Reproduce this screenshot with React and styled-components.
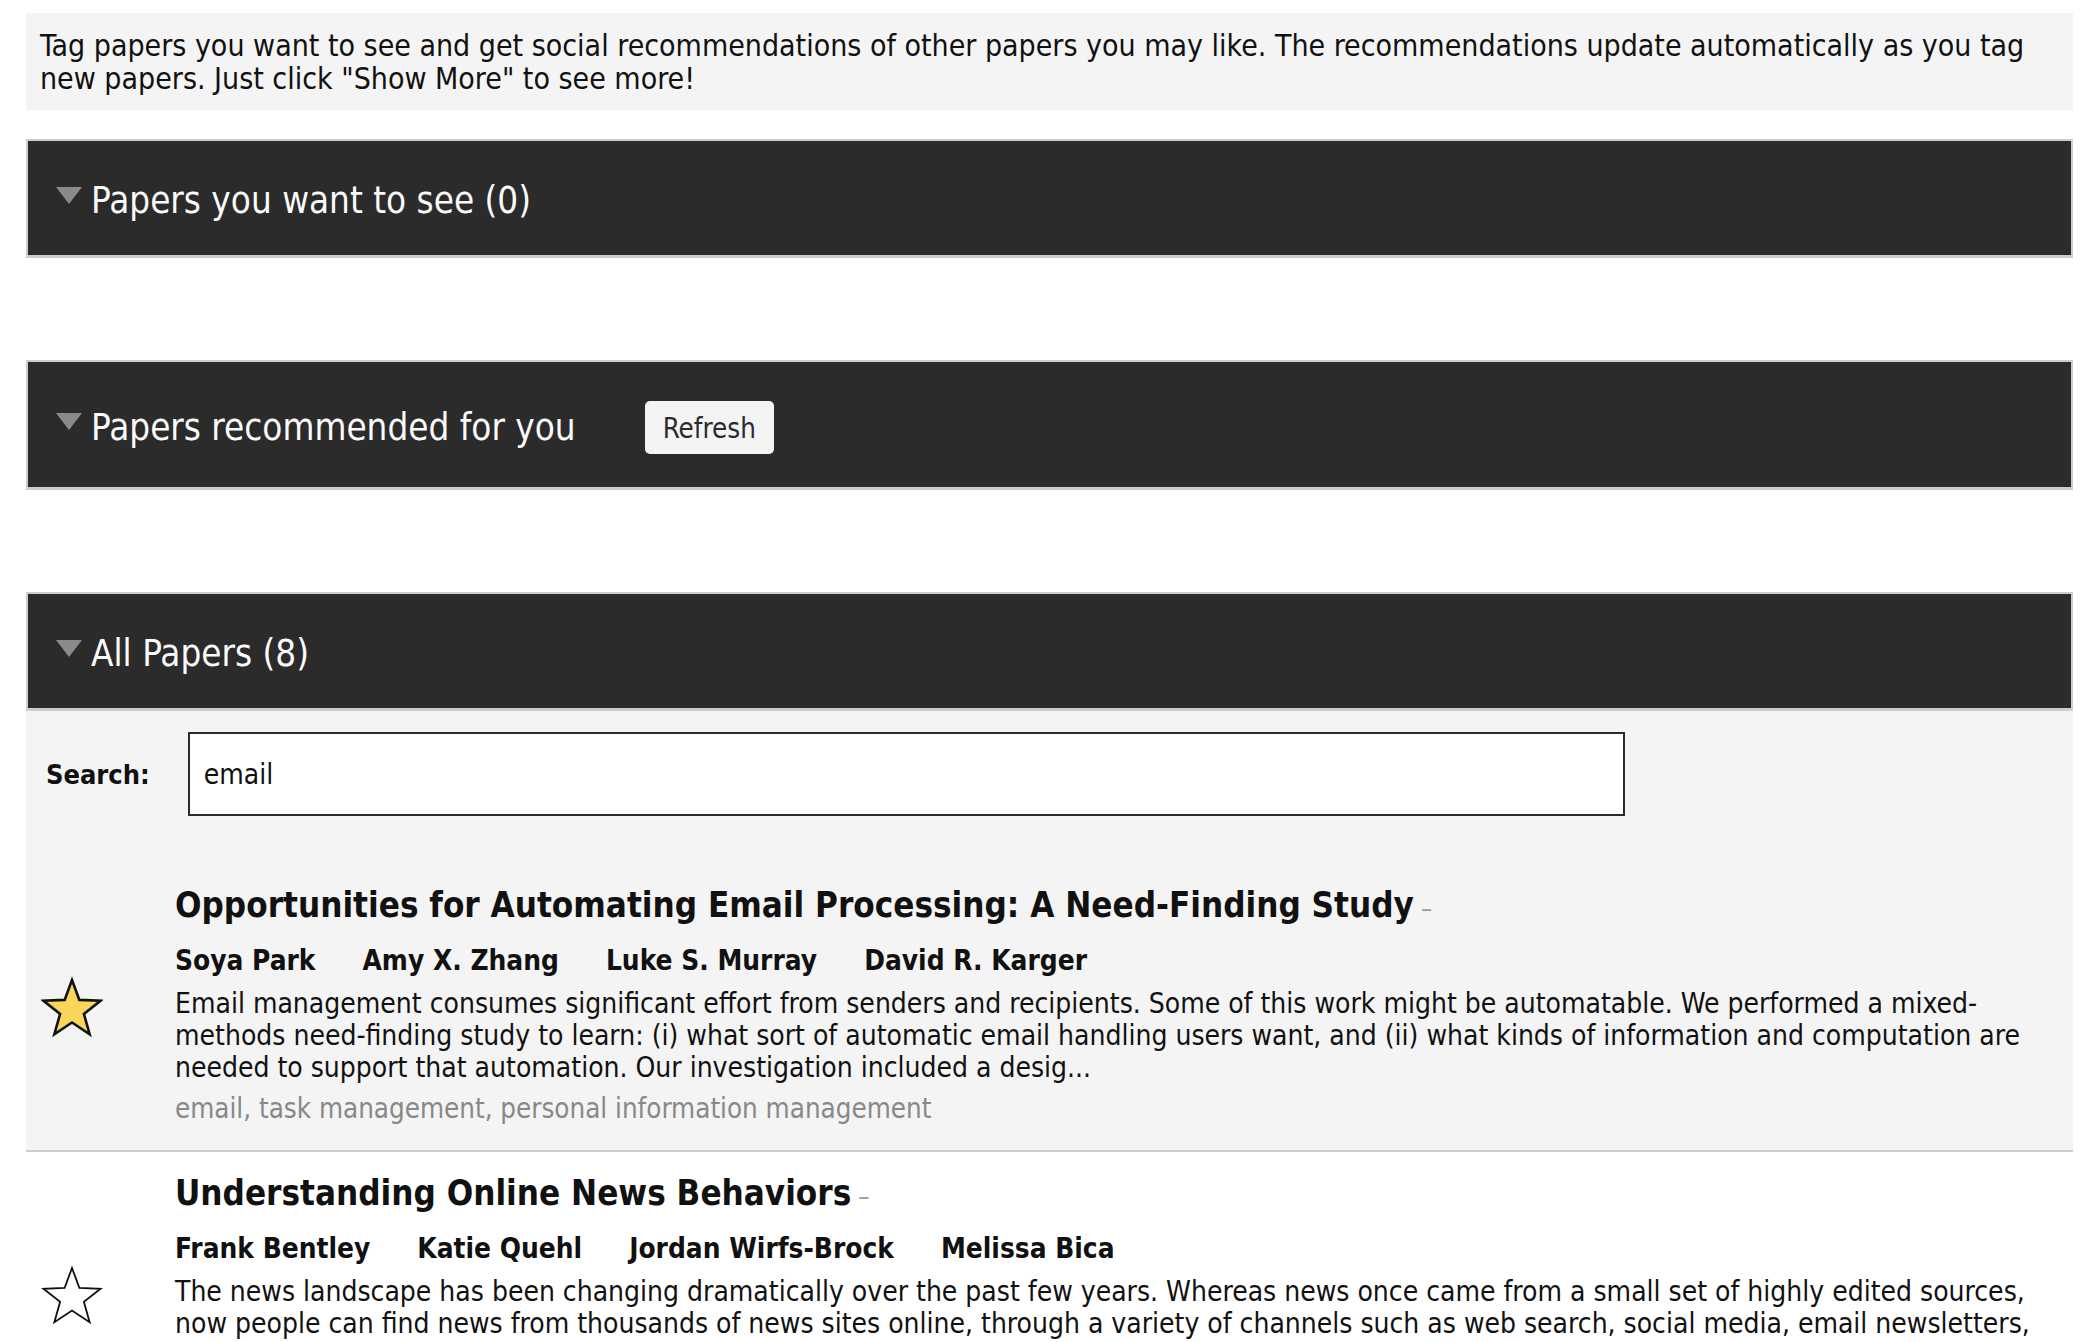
import React from "react";
import styled, { createGlobalStyle } from "styled-components";

const GlobalStyle = createGlobalStyle`
  body {
    margin: 0;
    background: #fff;
    color: #111;
    font-family: "DejaVu Sans Condensed", "DejaVu Sans", sans-serif;
  }
  * { box-sizing: border-box; }
`;

const Page = styled.div`
  padding: 13px 27px 0 26px;
`;

const Intro = styled.p`
  margin: 0 0 29px;
  padding: 16px 14px 15px;
  background: #f4f4f4;
  font-size: 30px;
  line-height: 33px;
`;

const SectionHeader = styled.div`
  display: flex;
  align-items: center;
  padding: 39px 20px 33px 28px;
  background: #2b2b2b;
  border: 2px solid #cdcdcd;
  border-bottom-width: 3px;
  color: #fafafa;
`;

const Caret = styled.span`
  width: 0;
  height: 0;
  margin: 0 9px 12px 0;
  border-left: 13.5px solid transparent;
  border-right: 13.5px solid transparent;
  border-top: 17px solid #8a8a8a;
`;

const HeaderTitle = styled.h2`
  margin: 0;
  font-size: 36.5px;
  font-weight: 400;
  line-height: 42px;
`;

const RefreshButton = styled.button`
  margin-left: 69px;
  height: 53px;
  padding: 0 18px;
  border: none;
  border-radius: 5px;
  background: #f4f4f4;
  color: #2b2b2b;
  font-family: inherit;
  font-size: 27.5px;
`;

const EmptyBody = styled.div`
  height: 102px;
`;

const SearchBar = styled.div`
  display: flex;
  align-items: center;
  gap: 38px;
  padding: 21px 0 48px 20px;
  background: #f4f4f4;
`;

const SearchLabel = styled.label`
  font-size: 27px;
  font-weight: 700;
`;

const SearchInput = styled.input`
  width: 1437px;
  height: 84px;
  padding: 0 14px;
  border: 2px solid #2b2b2b;
  background: #fff;
  color: #111;
  font-family: inherit;
  font-size: 28px;
  outline: none;
`;

const PaperRow = styled.div`
  display: grid;
  grid-template-columns: 149px 1fr;
  align-items: center;
  padding: 21px 33px 26px 0;
  background: ${(p) => (p.$starred ? "#f4f4f4" : "#fff")};
  border-bottom: 2px solid #cdcdcd;
`;

const StarCell = styled.div`
  display: flex;
  padding: 4px 0 0 15px;
`;

const PaperTitle = styled.h3`
  margin: 0;
  font-size: 34.7px;
  font-weight: 700;
  line-height: 40px;
`;

const Dash = styled.span`
  margin-left: 7px;
  color: #999;
  font-size: 25px;
  font-weight: 400;
`;

const Authors = styled.div`
  display: flex;
  gap: 47px;
  margin-top: 15px;
  font-size: 27.8px;
  font-weight: 700;
  line-height: 34px;
`;

const Abstract = styled.p`
  margin: 10px 0 0;
  font-size: 28px;
  line-height: 32px;
`;

const Tags = styled.div`
  margin-top: 8px;
  color: #888;
  font-size: 27.5px;
  line-height: 32px;
`;

const Star = ({ filled }) => (
  <svg width="62" height="62" viewBox="0 0 62 62">
    <polygon
      points="31,4 38.35,23.89 59.53,24.73 42.89,37.86 48.63,58.27 31,46.5 13.37,58.27 19.11,37.86 2.47,24.73 23.65,23.89"
      fill={filled ? "#f9d65a" : "#fff"}
      stroke="#111"
      strokeWidth={filled ? 2.6 : 1.8}
      strokeLinejoin="miter"
    />
  </svg>
);

const papers = [
  {
    starred: true,
    title: "Opportunities for Automating Email Processing: A Need-Finding Study",
    authors: ["Soya Park", "Amy X. Zhang", "Luke S. Murray", "David R. Karger"],
    abstract:
      "Email management consumes significant effort from senders and recipients. Some of this work might be automatable. We performed a mixed-methods need-finding study to learn: (i) what sort of automatic email handling users want, and (ii) what kinds of information and computation are needed to support that automation. Our investigation included a desig...",
    tags: "email, task management, personal information management",
  },
  {
    starred: false,
    title: "Understanding Online News Behaviors",
    authors: ["Frank Bentley", "Katie Quehl", "Jordan Wirfs-Brock", "Melissa Bica"],
    abstract:
      "The news landscape has been changing dramatically over the past few years. Whereas news once came from a small set of highly edited sources, now people can find news from thousands of news sites online, through a variety of channels such as web search, social media, email newsletters, media alerts, and more. We conducted a large survey and a diary study to und...",
    tags: "news, information seeking, social media",
  },
];

const Paper = ({ paper }) => (
  <PaperRow $starred={paper.starred}>
    <StarCell>
      <Star filled={paper.starred} />
    </StarCell>
    <div>
      <PaperTitle>
        {paper.title}
        <Dash>–</Dash>
      </PaperTitle>
      <Authors>
        {paper.authors.map((a) => (
          <span key={a}>{a}</span>
        ))}
      </Authors>
      <Abstract>{paper.abstract}</Abstract>
      <Tags>{paper.tags}</Tags>
    </div>
  </PaperRow>
);

export default function App() {
  return (
    <>
      <GlobalStyle />
      <Page>
        <Intro>
          Tag papers you want to see and get social recommendations of other papers you may like. The
          recommendations update automatically as you tag new papers. Just click "Show More" to see more!
        </Intro>

        <section>
          <SectionHeader>
            <Caret />
            <HeaderTitle>Papers you want to see (0)</HeaderTitle>
          </SectionHeader>
          <EmptyBody />
        </section>

        <section>
          <SectionHeader>
            <Caret />
            <HeaderTitle>Papers recommended for you</HeaderTitle>
            <RefreshButton>Refresh</RefreshButton>
          </SectionHeader>
          <EmptyBody />
        </section>

        <section>
          <SectionHeader>
            <Caret />
            <HeaderTitle>All Papers (8)</HeaderTitle>
          </SectionHeader>
          <SearchBar>
            <SearchLabel htmlFor="search">Search:</SearchLabel>
            <SearchInput id="search" defaultValue="email" />
          </SearchBar>
          {papers.map((p) => (
            <Paper key={p.title} paper={p} />
          ))}
        </section>
      </Page>
    </>
  );
}
